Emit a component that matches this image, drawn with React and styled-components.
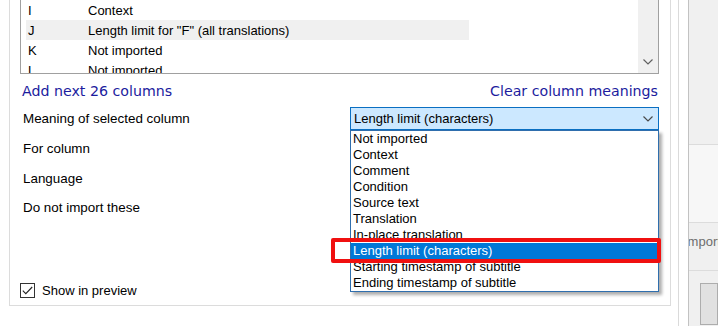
import React from "react";
import styled, { createGlobalStyle } from "styled-components";

const GlobalStyle = createGlobalStyle`
  html, body {
    margin: 0;
    padding: 0;
    background: #fff;
  }
  body {
    font-family: "Liberation Sans", Arial, sans-serif;
    font-size: 13px;
    color: #000;
  }
`;

const columns = [
  { key: "I", meaning: "Context" },
  { key: "J", meaning: 'Length limit for "F" (all translations)', selected: true },
  { key: "K", meaning: "Not imported" },
  { key: "L", meaning: "Not imported" },
];

const meanings = [
  "Not imported",
  "Context",
  "Comment",
  "Condition",
  "Source text",
  "Translation",
  "In-place translation",
  "Length limit (characters)",
  "Starting timestamp of subtitle",
  "Ending timestamp of subtitle",
];

const Screen = styled.div`
  display: flex;
  width: 718px;
  height: 326px;
  overflow: hidden;
  background: #fff;
`;

const Dialog = styled.div`
  display: flex;
  width: 688px;
  flex-shrink: 0;
  background: #fff;
`;

const Frame = styled.div`
  width: 679px;
  box-sizing: border-box;
  padding-left: 9px;
  border-right: 1px solid #dadada;
`;

const GroupBox = styled.section`
  display: flex;
  flex-direction: column;
  width: 662px;
  height: 306px;
  box-sizing: border-box;
  border: 1px solid #dcdcdc;
  border-top: none;
  padding: 0 11px 7px 10px;
`;

const ListBox = styled.div`
  display: flex;
  height: 74px;
  box-sizing: border-box;
  border: 1px solid #a0a0a0;
  border-top: none;
  overflow: hidden;
`;

const Rows = styled.div`
  flex: 1;
  overflow: hidden;
`;

const Row = styled.div`
  display: flex;
  align-items: center;
  width: 443px;
  height: 20px;
  margin-left: 5px;
  background: ${(p) => (p.$selected ? "#f0f0f0" : "transparent")};
  white-space: nowrap;
`;

const KeyCell = styled.span`
  width: 62px;
  padding-left: 2px;
  box-sizing: border-box;
`;

const Scrollbar = styled.div`
  display: flex;
  flex-direction: column;
  justify-content: flex-end;
  width: 20px;
  background: #f0f0f0;
`;

const ScrollArrow = styled.div`
  display: flex;
  align-items: center;
  justify-content: center;
  height: 22px;
`;

const LinkRow = styled.div`
  display: flex;
  justify-content: space-between;
  height: 30px;
  box-sizing: border-box;
  padding: 9px 1px 0 2px;
`;

const Link = styled.a`
  font-family: "DejaVu Sans", Verdana, sans-serif;
  font-size: 14.2px;
  line-height: 16px;
  color: #1c1c9e;
  text-decoration: none;
  cursor: pointer;
`;

const FieldRow = styled.div`
  display: flex;
  align-items: center;
  height: ${(p) => p.$h}px;
`;

const Label = styled.span`
  width: 330px;
  padding-left: 3px;
  box-sizing: border-box;
  font-size: 13.4px;
`;

const Combo = styled.div`
  position: relative;
  display: flex;
  align-items: center;
  justify-content: space-between;
  width: 309px;
  height: 23px;
  box-sizing: border-box;
  padding: 0 5px 0 3px;
  border: 1px solid ${(p) => (p.$open ? "#0a6fc2" : "#adadad")};
  background: ${(p) => (p.$open ? "#cce8ff" : "#e5e5e5")};
  z-index: ${(p) => (p.$open ? 2 : 0)};
`;

const DropList = styled.ul`
  position: absolute;
  top: calc(100% + 1px);
  left: -1px;
  right: -1px;
  margin: 0;
  padding: 0;
  list-style: none;
  border: 1px solid #2f6ead;
  background: #fff;
  box-shadow: 3px 3px 3px rgba(0, 0, 0, 0.32);
`;

const Option = styled.li`
  height: 16px;
  line-height: 16px;
  padding-left: 2px;
  white-space: nowrap;
  background: ${(p) => (p.$active ? "#0078d7" : "transparent")};
  color: ${(p) => (p.$active ? "#fff" : "#000")};
`;

const Callout = styled.div`
  position: absolute;
  left: -20px;
  top: 107px;
  width: 330px;
  height: 25px;
  box-sizing: border-box;
  border: 4px solid #f01010;
  border-radius: 2px;
  pointer-events: none;
`;

const CheckRow = styled.label`
  display: flex;
  align-items: center;
  gap: 7px;
  margin-top: auto;
  height: 16px;
`;

const CheckBox = styled.span`
  display: flex;
  align-items: center;
  justify-content: center;
  width: 15px;
  height: 15px;
  box-sizing: border-box;
  border: 1px solid #333;
  background: #fff;
`;

const BackWindow = styled.div`
  flex: 1;
  display: flex;
  flex-direction: column;
  background: #f0f0f0;
  border-left: 1px solid #c2c2c2;
  box-shadow: inset 4px 0 4px -3px rgba(0, 0, 0, 0.2);
  overflow: hidden;
`;

const Band = styled.div`
  display: flex;
  align-items: flex-start;
  height: ${(p) => p.$h}px;
  box-sizing: border-box;
  padding-top: ${(p) => p.$pad || 0}px;
  flex-shrink: 0;
  background: ${(p) => p.$bg};
  border-bottom: ${(p) => (p.$line ? "1px solid #dcdcdc" : "none")};
  overflow: hidden;
`;

const FadedText = styled.span`
  margin-left: -5px;
  color: #6d6d6d;
  font-size: 13px;
  line-height: 16px;
  white-space: nowrap;
`;

const GhostButton = styled.div`
  width: 60px;
  height: 40px;
  margin: 12px 0 0 11px;
  border: 1px solid #adadad;
  background: #e1e1e1;
`;

function Chevron({ color = "#555" }) {
  return (
    <svg width="10" height="6" viewBox="0 0 10 6">
      <polyline points="0.5,0.5 5,5 9.5,0.5" fill="none" stroke={color} strokeWidth="1.2" />
    </svg>
  );
}

function Tick() {
  return (
    <svg width="11" height="9" viewBox="0 0 11 9">
      <polyline points="0.8,4.6 3.8,7.6 10.2,1" fill="none" stroke="#222" strokeWidth="1.1" />
    </svg>
  );
}

export default function App() {
  return (
    <>
      <GlobalStyle />
      <Screen>
        <Dialog>
          <Frame>
            <GroupBox>
              <ListBox>
                <Rows>
                  {columns.map((c) => (
                    <Row key={c.key} $selected={c.selected}>
                      <KeyCell>{c.key}</KeyCell>
                      <span>{c.meaning}</span>
                    </Row>
                  ))}
                </Rows>
                <Scrollbar>
                  <ScrollArrow>
                    <Chevron color="#606060" />
                  </ScrollArrow>
                </Scrollbar>
              </ListBox>

              <LinkRow>
                <Link>Add next 26 columns</Link>
                <Link>Clear column meanings</Link>
              </LinkRow>

              <FieldRow $h={29}>
                <Label>Meaning of selected column</Label>
                <Combo $open>
                  <span>Length limit (characters)</span>
                  <Chevron color="#4a4a4a" />
                  <DropList>
                    {meanings.map((m) => (
                      <Option key={m} $active={m === "Length limit (characters)"}>
                        {m}
                      </Option>
                    ))}
                    <Callout />
                  </DropList>
                </Combo>
              </FieldRow>
              <FieldRow $h={30}>
                <Label>For column</Label>
                <Combo />
              </FieldRow>
              <FieldRow $h={30}>
                <Label>Language</Label>
                <Combo />
              </FieldRow>
              <FieldRow $h={29}>
                <Label>Do not import these</Label>
                <Combo />
              </FieldRow>

              <CheckRow>
                <CheckBox>
                  <Tick />
                </CheckBox>
                <span>Show in preview</span>
              </CheckRow>
            </GroupBox>
          </Frame>
        </Dialog>

        <BackWindow>
          <Band $h={145} $bg="#f0f0f0" $line />
          <Band $h={78} $bg="#f7f7f7" $line />
          <Band $h={48} $bg="#f0f0f0" $line $pad={11}>
            <FadedText>Import</FadedText>
          </Band>
          <Band $h={60} $bg="#f0f0f0">
            <GhostButton />
          </Band>
        </BackWindow>
      </Screen>
    </>
  );
}
